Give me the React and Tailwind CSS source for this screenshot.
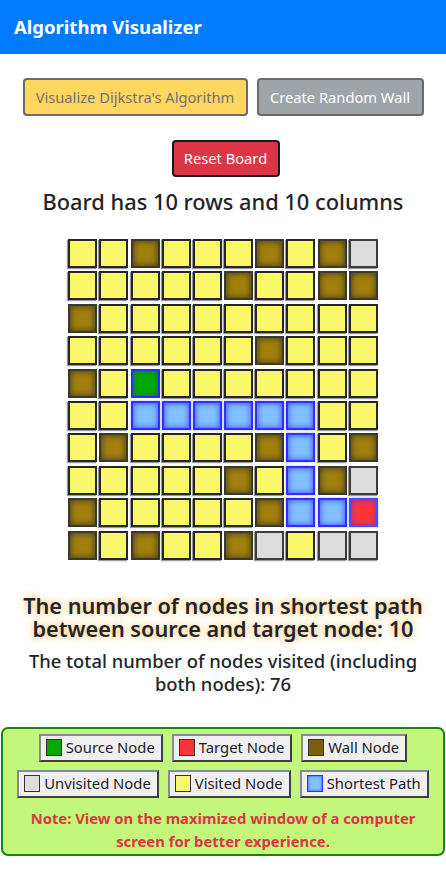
import React from "react";

const GRID = [
  "YYWYYYWYWU",
  "YYYYYWYYWW",
  "WYYYYYYYYY",
  "YYYYYYWYYY",
  "WYSYYYYYYY",
  "YYPPPPPPYY",
  "YWYYYYWPYW",
  "YYYYYWYPWU",
  "WYYYYYWPPT",
  "WYWYYWUYUU",
];

const CELL = {
  Y: "bg-[#f9f86a] border-[#262626] shadow-[-1px_1px_1px_#9a9a9a]",
  U: "bg-[#dcdcdc] border-[#3c3c3c] shadow-[-1px_1px_1px_#9a9a9a]",
  W: "bg-[#a2800e] border-[#3a3a2a] shadow-[inset_0_0_7px_#3a3420]",
  S: "bg-[#00aa00] border-[#2a2aff] shadow-[inset_0_0_6px_#1a6a30]",
  T: "bg-[#ff3535] border-[#4a4aff] shadow-[inset_0_0_6px_#7a30c0,0_0_2px_#a0a0ff]",
  P: "bg-[#80c0ff] border-[#2f2fff] shadow-[inset_0_0_6px_#4040ff,0_0_2px_#a0a0ff]",
};

function Cell({ t }) {
  return <div className={"w-[29px] h-[29px] border-2 border-solid " + CELL[t]} />;
}

function Legend({ swatch, label }) {
  return (
    <div className="flex items-center h-[28px] pl-[5px] pr-[6px] bg-[#efefef] border-2 border-solid border-t-[#8a8a8a] border-l-[#8a8a8a] border-r-[#3e3e3e] border-b-[#3e3e3e] text-[14.8px] text-[#1e1a28] leading-none">
      <span className={"inline-block w-[16px] h-[17px] mr-[4px] border border-solid " + swatch} />
      <span>{label}</span>
    </div>
  );
}

export default function App() {
  return (
    <div className="w-[446px] min-h-[885px] bg-white text-[#212529]" style={{ fontFamily: '"Noto Sans", "Open Sans", sans-serif' }}>
      <div className="h-[54px] bg-[#007bff] flex items-center pl-[14px]">
        <span className="text-white font-bold text-[18.5px]">Algorithm Visualizer</span>
      </div>

      <div className="flex justify-center gap-[9px] mt-[24px]">
        <button className="h-[38px] w-[225px] rounded-[4px] bg-[#ffd65e] border-2 border-solid border-[#6a6a6a] text-[#707276] text-[14.7px]">
          Visualize Dijkstra's Algorithm
        </button>
        <button className="h-[38px] w-[167px] rounded-[4px] bg-[#9fa4a9] border-2 border-solid border-[#6a6a6a] text-white text-[14.7px]">
          Create Random Wall
        </button>
      </div>

      <div className="flex justify-center mt-[24px] pl-[5px]">
        <button className="h-[37px] w-[108px] rounded-[4px] bg-[#dc3545] border-2 border-solid border-[#1a1a1a] text-white text-[14.7px]">
          Reset Board
        </button>
      </div>

      <div className="text-center mt-[9px] text-[21.8px] font-medium text-[#212529] leading-[32px]">
        Board has 10 rows and 10 columns
      </div>

      <div className="flex justify-center mt-[21px]">
        <div className="grid grid-cols-[repeat(10,29px)] gap-x-[2.2px] gap-y-[3.4px]">
          {GRID.map((row, r) =>
            row.split("").map((t, c) => <Cell key={r + "-" + c} t={t} />)
          )}
        </div>
      </div>

      <div className="text-center mt-[34px] text-[21.7px] font-semibold leading-[23px] text-[#212529] [text-shadow:0_0_8px_#ffb84a]">
        The number of nodes in shortest path
        <br />
        between source and target node: 10
      </div>

      <div className="text-center mt-[9px] text-[18.4px] font-medium leading-[23px] text-[#212529]">
        The total number of nodes visited (including
        <br />
        both nodes): 76
      </div>

      <div className="mt-[32px] mx-[1px] rounded-[7px] border-2 border-solid border-[#168516] bg-[#c3f77b] pt-[5px] pb-[1px]">
        <div className="flex justify-center gap-[9px]">
          <Legend swatch="bg-[#00aa00] border-[#333]" label="Source Node" />
          <Legend swatch="bg-[#ff3535] border-[#333]" label="Target Node" />
          <Legend swatch="bg-[#7a5f0e] border-[#333]" label="Wall Node" />
        </div>
        <div className="flex justify-center gap-[9px] mt-[8px]">
          <Legend swatch="bg-[#dcdcdc] border-[#333]" label="Unvisited Node" />
          <Legend swatch="bg-[#f9f86a] border-[#333]" label="Visited Node" />
          <Legend swatch="bg-[#80c0ff] border-[#2f2fff] shadow-[inset_0_0_3px_#4040ff]" label="Shortest Path" />
        </div>
        <div className="text-center mt-[9px] text-[14.8px] font-bold leading-[23px] text-[#dc3545]">
          Note: View on the maximized window of a computer
          <br />
          screen for better experience.
        </div>
      </div>
    </div>
  );
}
